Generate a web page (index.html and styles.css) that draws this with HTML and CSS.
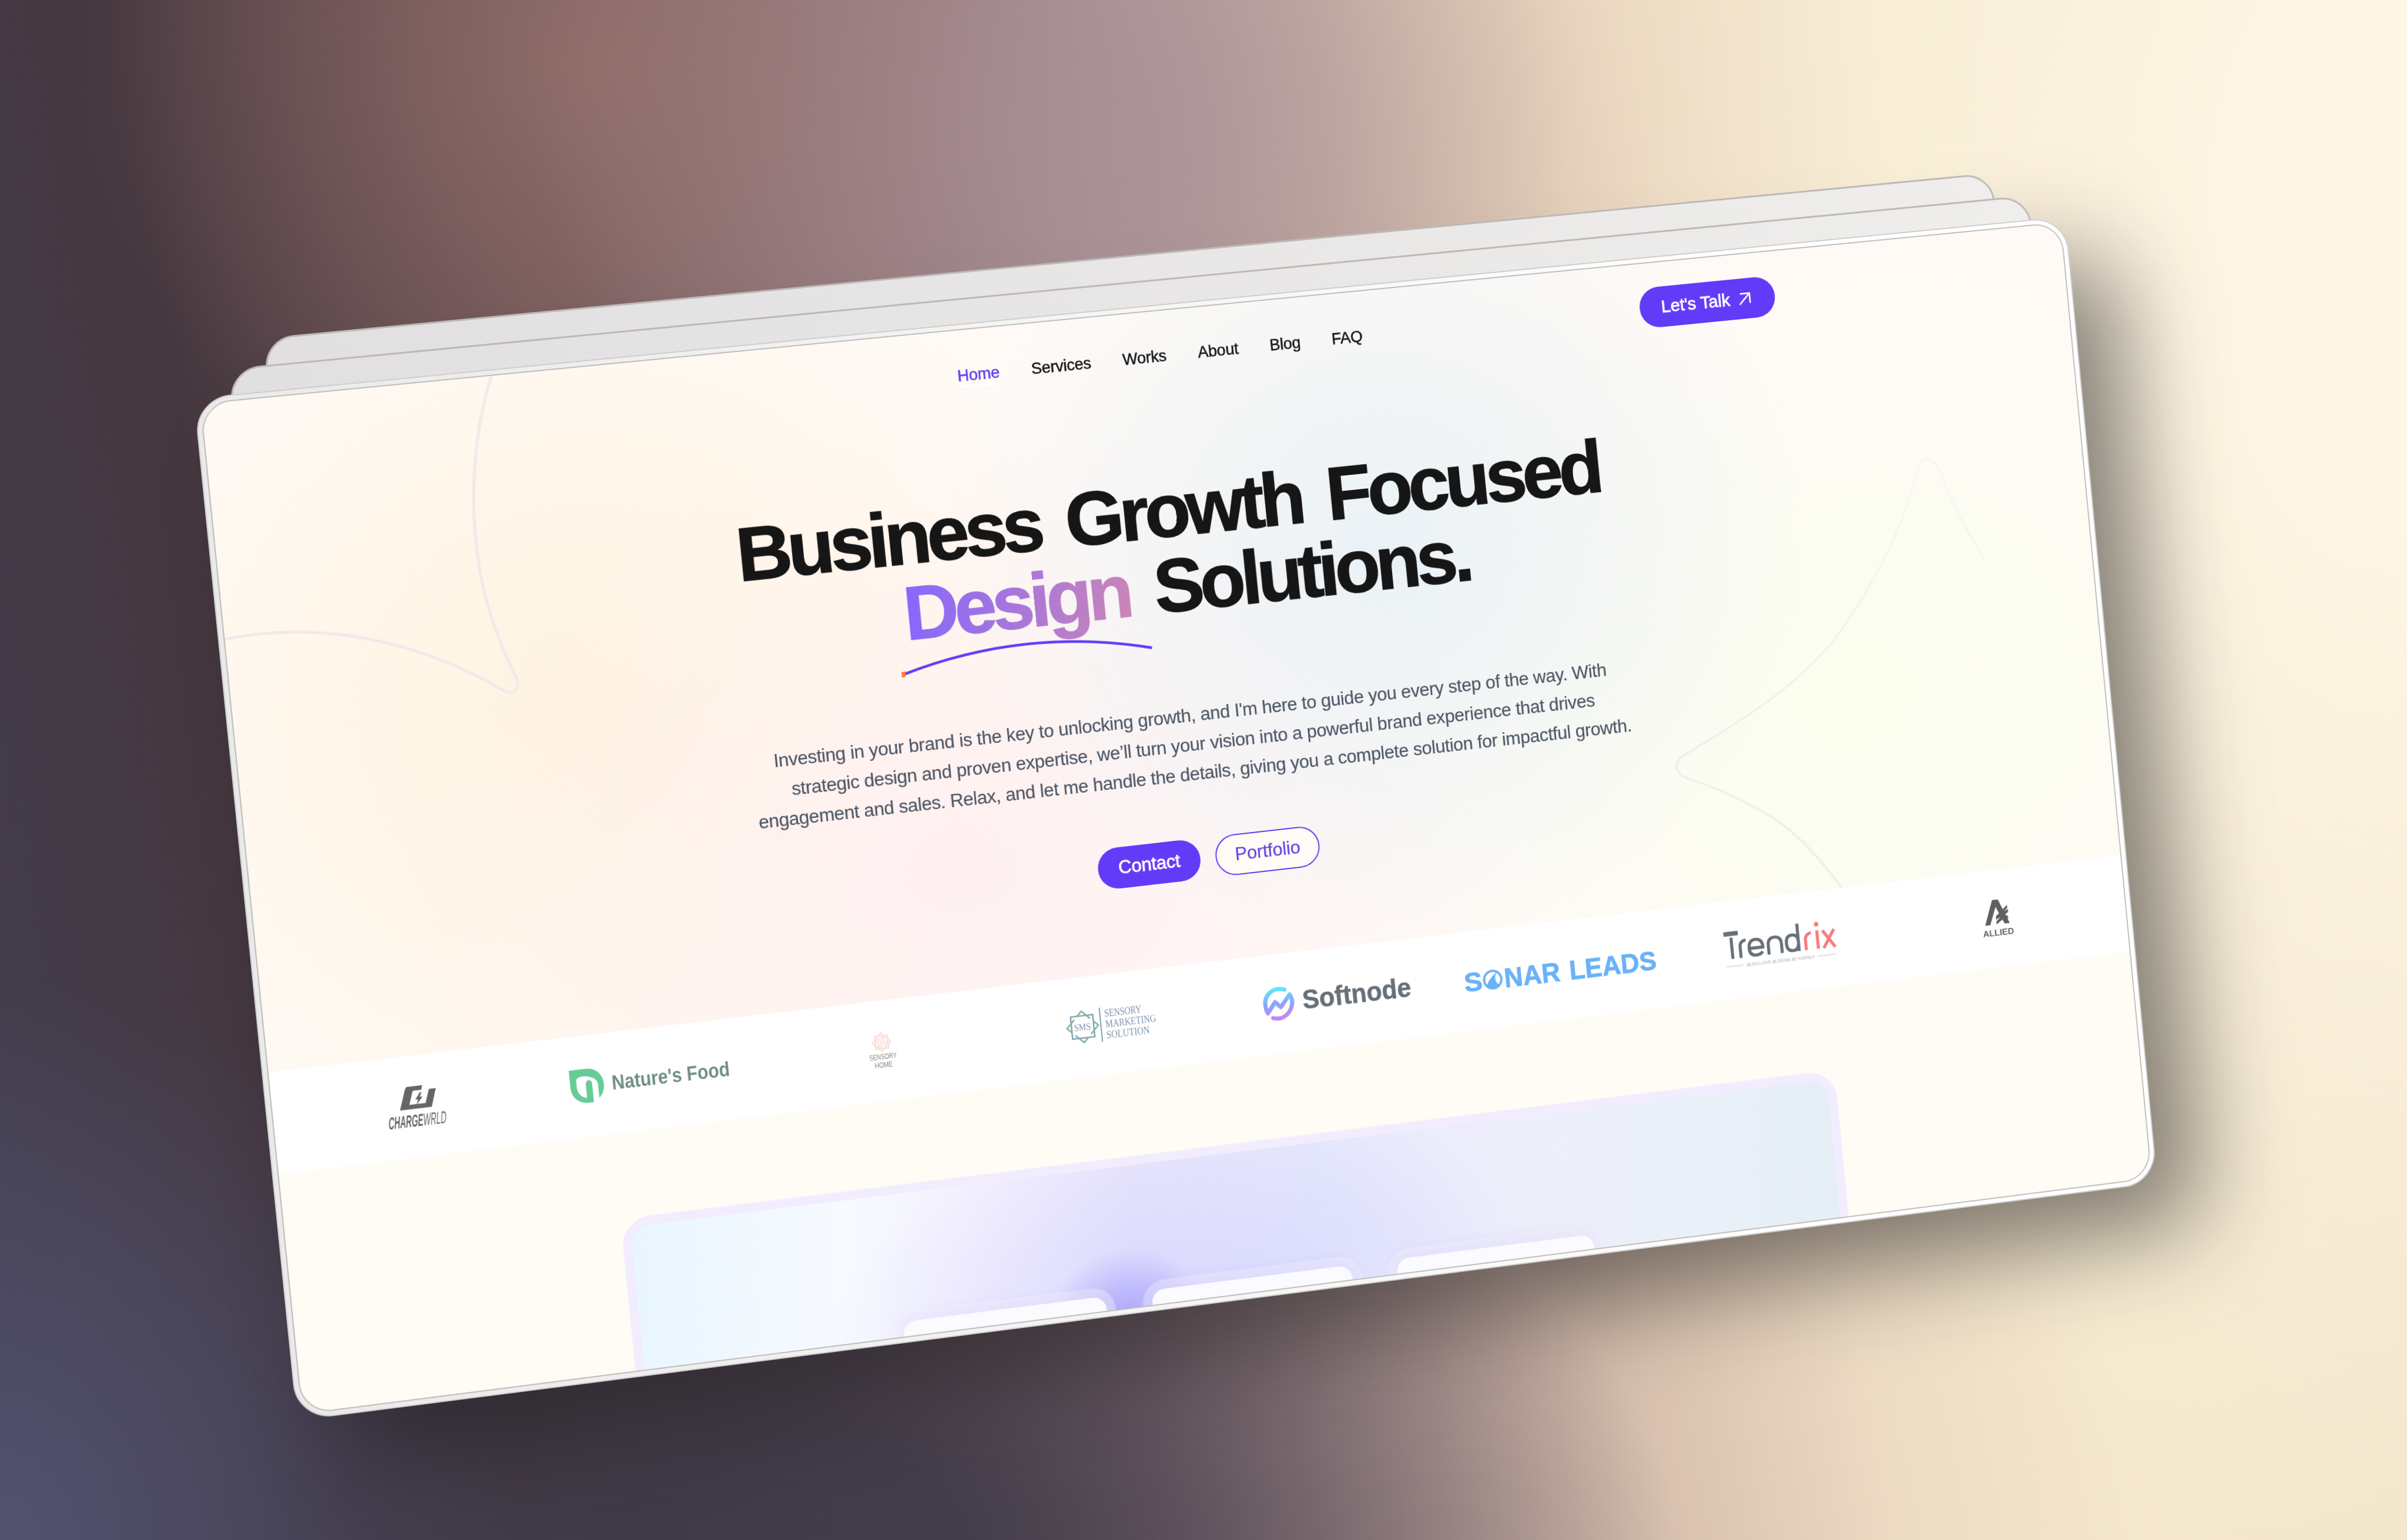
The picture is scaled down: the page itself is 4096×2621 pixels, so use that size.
FILE: index.html
```html
<!DOCTYPE html>
<html lang="en">
<head>
<meta charset="utf-8">
<title>Business Growth Focused Design Solutions</title>
<link rel="stylesheet" href="styles.css">
</head>
<body>
<main class="scene">
  <div class="shade"></div>
  <div class="sheet sheet-back"></div>
  <div class="sheet sheet-mid"></div>
  <div class="window">
    <div class="page">
      <section class="hero">
        <svg class="hero-lines" viewBox="0 0 3178 1112" fill="none" stroke-width="5" stroke-linecap="round">
          <defs><linearGradient id="fade" gradientUnits="userSpaceOnUse" x1="0" y1="380" x2="0" y2="900"><stop offset="0" stop-color="#eef0ee" stop-opacity=".3"/><stop offset="1" stop-color="#eff0ec"/></linearGradient></defs>
          <path stroke="#f3e8ea" d="M474 -2C427 110 413 240 425 345C432 410 449 463 464 503C473 525 456 535 440 523C355 458 240 404 114 391C75 387 35 387 -2 391"/>
          <path stroke="url(#fade)" stroke-width="4" d="M2676 1112C2640 1050 2600 1000 2555 968C2515 940 2470 912 2425 893C2402 882 2402 862 2422 852C2540 800 2650 745 2721 665C2800 575 2850 490 2880 408C2888 380 2910 380 2920 408C2940 480 2960 520 2985 570"/>
        </svg>
        <header class="topbar">
          <nav class="nav">
            <a class="active">Home</a><a>Services</a><a>Works</a><a>About</a><a>Blog</a><a>FAQ</a>
          </nav>
          <a class="btn talk">Let's Talk
            <svg class="arrow" viewBox="0 0 24 24" fill="none" stroke="#fff" stroke-width="2.8"><path d="M2 22L22 2M4 2.500H21.500V20"/></svg>
          </a>
        </header>
        <h1 class="title">
          <span class="line">Business Growth Focused</span>
          <span class="line second"><span class="accent">Design</span> Solutions.</span>
          <svg class="swoosh" viewBox="0 0 430 44" fill="none"><path d="M4 38Q215 -20 426 38" stroke="#613bf8" stroke-width="4.5"/><path d="M1 34L8 33L7 42L1 43Z" fill="#ff7a3c"/></svg>
        </h1>
        <p class="lead">
          <span>Investing in your brand is the key to unlocking growth, and I'm here to guide you every step of the way. With</span>
          <span>strategic design and proven expertise, we’ll turn your vision into a powerful brand experience that drives</span>
          <span>engagement and sales. Relax, and let me handle the details, giving you a complete solution for impactful growth.</span>
        </p>
        <div class="actions">
          <a class="btn contact">Contact</a>
          <a class="btn outline">Portfolio</a>
        </div>
      </section>

      <section class="brands">
        <div class="brand">
          <svg width="102" height="70" viewBox="0 0 106 74">
            <g fill="#666">
              <path d="M41 1H68L66 9H51L43 33H62L59 41H26L38 5ZM79 9H91L81 41H56L59 33H71Z"/>
              <path d="M63 13L54 25H59L55 35L67 21H62L66 13Z"/>
              <text transform="translate(3 72) skewX(-8)" font-size="30" font-weight="700" textLength="60" lengthAdjust="spacingAndGlyphs">CHARGE</text>
              <text transform="translate(63 72) skewX(-8)" font-size="30" textLength="40" lengthAdjust="spacingAndGlyphs">WRLD</text>
            </g>
          </svg>
        </div>
        <div class="brand">
          <svg width="268" height="61" viewBox="0 0 282 64">
            <path fill="#66cc98" d="M1 1H30C48 1 59 14 59 31C59 42 55 49 49 55V30C49 14 13 8 12 20V33C13 45 21 51 28 52V29C28 19 39 19 39 29V61H31C13 61 1 49 1 31Z"/>
            <text x="73" y="43" font-size="36" font-weight="700" fill="#6f8f80" textLength="206" lengthAdjust="spacingAndGlyphs">Nature's Food</text>
          </svg>
        </div>
        <div class="brand">
          <svg width="52" height="62" viewBox="0 0 52 62">
            <g fill="none" stroke="#fadfdb" stroke-width="2">
              <rect x="14" y="5" width="22" height="22"/><rect x="14" y="5" width="22" height="22" transform="rotate(45 25 16)"/>
              <rect x="16" y="7" width="18" height="18" transform="rotate(22.5 25 16)"/><circle cx="25" cy="16" r="6"/><circle cx="25" cy="16" r="2"/>
            </g>
            <g font-size="12" fill="#8c8484">
              <text x="2" y="45" textLength="46" lengthAdjust="spacingAndGlyphs">SENSORY</text>
              <text x="10" y="59" textLength="30" lengthAdjust="spacingAndGlyphs">HOME</text>
            </g>
          </svg>
        </div>
        <div class="brand">
          <svg width="157" height="63" viewBox="0 0 162 64">
            <rect x="9.500" y="11.500" width="39" height="39" fill="none" stroke="#7d9bb8" stroke-width="2.4"/>
            <rect x="9.500" y="11.500" width="39" height="39" fill="none" stroke="#7fb391" stroke-width="2.6" stroke-dasharray="32 7" stroke-dashoffset="12" transform="rotate(45 29 31)"/>
            <path d="M61 1V61" stroke="#7d9bb8" stroke-width="2"/>
            <g class="serif" fill="#7990a8">
              <text x="14" y="37" font-size="17" textLength="29" lengthAdjust="spacingAndGlyphs">SMS</text>
              <text x="69" y="18" font-size="19" textLength="65" lengthAdjust="spacingAndGlyphs">SENSORY</text>
              <text x="69" y="37" font-size="19" textLength="89" lengthAdjust="spacingAndGlyphs">MARKETING</text>
              <text x="69" y="56" font-size="19" textLength="76" lengthAdjust="spacingAndGlyphs">SOLUTION</text>
            </g>
          </svg>
        </div>
        <div class="brand">
          <svg width="260" height="64" viewBox="0 0 260 64">
            <defs><linearGradient id="ring" x1="0" y1="0" x2="0" y2="1"><stop offset="0" stop-color="#5ee6f8"/><stop offset=".5" stop-color="#8aa4ff"/><stop offset="1" stop-color="#c585ee"/></linearGradient></defs>
            <g fill="none" stroke="url(#ring)" stroke-width="7" stroke-linejoin="round">
              <path stroke-linecap="round" d="M40 9C22 1 4 14 5 32C5 38 6 42 8 46L22 28L31 38L48 18C55 30 50 44 40 52C33 57 24 58 16 55"/>
            </g>
            <text x="69" y="46" font-size="46" font-weight="700" fill="#687078" stroke="#687078" stroke-width=".6" textLength="188" lengthAdjust="spacingAndGlyphs">Softnode</text>
          </svg>
        </div>
        <div class="brand">
          <svg width="340" height="50" viewBox="0 0 340 50">
            <g fill="#68b2f8" stroke="#68b2f8" font-size="47" font-weight="700">
              <text x="1" y="43" stroke-width=".8" textLength="32" lengthAdjust="spacingAndGlyphs">S</text>
              <text x="71" y="43" stroke-width=".8" textLength="98" lengthAdjust="spacingAndGlyphs">NAR</text>
              <text x="185" y="43" stroke-width=".8" textLength="153" lengthAdjust="spacingAndGlyphs">LEADS</text>
              <circle cx="51" cy="27" r="15" fill="none" stroke-width="4"/>
              <path stroke="none" d="M40 37C43 28 50 21 59 15C54 23 54 30 61 37C56 44 45 44 40 37Z"/>
            </g>
          </svg>
        </div>
        <div class="brand">
          <svg width="200" height="74" viewBox="0 0 204 76">
            <g fill="none" stroke="#687078" stroke-width="5.500">
              <path stroke-width="8" d="M1 9H27"/><path d="M14 16V54M29 54V34Q29 24 40 23M45 39H70Q70 24 57 24Q45 24 45 39Q45 52 57 52Q65 52 69 47M80 54V37Q80 24 92 24Q104 24 104 37V54M135 5V39Q135 52 124 52Q113 52 113 38Q113 24 124 24Q135 24 135 37V54"/>
              <path stroke="#f77b80" d="M148 54V36Q148 25 159 24M170 21V54M180 22L201 54M201 22L180 54"/>
            </g>
            <circle cx="170" cy="10" r="4" fill="#f77b80"/>
            <text x="38" y="70" font-size="8" fill="#aaa" textLength="124" lengthAdjust="spacingAndGlyphs">BE EXCLUSIVE, BE DEVINE, BE YOURSELF</text>
            <path d="M2 67H32M168 67H200" stroke="#ccc" stroke-width="2" stroke-dasharray="2 1"/>
          </svg>
        </div>
        <div class="brand">
          <svg width="58" height="68" viewBox="0 0 56 66">
            <path fill="#606060" d="M22 1H32L49 43H40L27 13L15 43H6ZM26 29L47 12V17L41 22L48 19V24L42 28L47 31V35L41 33L26 43V38L34 31L26 35Z"/>
            <text x="1" y="62" font-size="15" font-weight="700" fill="#606060" textLength="54">ALLIED</text>
          </svg>
        </div>
      </section>

      <section class="showcase">
        <div class="panel">
          <div class="card"></div><div class="card"></div><div class="card"></div>
        </div>
      </section>
    </div>
  </div>
</main>
</body>
</html>
```
FILE: styles.css
```css
* { box-sizing: border-box; }

body {
  margin: 0;
  width: 4096px;
  height: 2621px;
  overflow: hidden;
  position: relative;
  font-family: "Liberation Sans", sans-serif;
  background:
    radial-gradient(ellipse 900px 950px at 0% 100%, rgba(84, 85, 116, .9), rgba(84, 85, 116, 0) 100%),
    radial-gradient(ellipse 1500px 800px at 33% 100%, rgba(58, 54, 70, .85) 20%, rgba(58, 54, 70, 0) 100%),
    radial-gradient(ellipse 900px 800px at 25% 4%, rgba(158, 118, 112, .65), rgba(158, 118, 112, 0) 100%),
    radial-gradient(ellipse 900px 800px at 44% 8%, rgba(168, 146, 154, .8) 10%, rgba(168, 146, 154, 0) 100%),
    radial-gradient(ellipse 1300px 2300px at 100% 15%, rgba(255, 247, 230, .95) 20%, rgba(255, 247, 230, 0) 100%),
    linear-gradient(80deg, #433e50 0%, #45373f 14%, #6c5355 28%, #92787c 44%, #b99f98 54%, #dac3b0 63%, #eddbc3 71%, #f5e8cc 80%, #f1e3ca 100%);
}

/* Plane tilted in perspective: everything inside is laid out flat at 3200 x 1703. */
.scene {
  position: absolute;
  left: 0;
  top: 0;
  width: 3200px;
  height: 1703px;
  transform-origin: 0 0;
  transform: matrix3d(1.0595656, -0.0900719, 0, 0.00001823531, 0.103946, 1.026183, 0, 0.00000177087, 0, 0, 1, 0, 329.5, 677.7, 0, 1);
}

.shade {
  position: absolute;
  inset: 0;
  border-radius: 60px;
  box-shadow: 75px 80px 170px rgba(30, 28, 30, .55);
}

.sheet {
  position: absolute;
  height: 400px;
  border: 3px solid #bcb9b7;
  background: linear-gradient(90deg, #e1dfe0, #efeeec);
}
.sheet-mid { left: 60px; right: 62px; top: -43px; border-radius: 52px; }
.sheet-back { left: 121px; right: 124px; top: -88px; border-radius: 50px; }

.window {
  position: relative;
  height: 100%;
  padding: 7px;
  border: 2px solid #cfcecd;
  border-radius: 60px;
  background: linear-gradient(90deg, #eaeaeb, #f6f6f5 50%, #fff 85%);
}

.page {
  height: 100%;
  overflow: hidden;
  border: 2px solid #c0bebb;
  border-radius: 51px;
  background: #fffbf5;
}

.hero {
  position: relative;
  height: 1112px;
  display: flex;
  flex-direction: column;
  align-items: center;
  padding-top: 42px;
  background:
    radial-gradient(ellipse 750px 700px at 61% 40%, rgba(233, 241, 246, .95), rgba(233, 241, 246, 0)),
    radial-gradient(ellipse 900px 720px at 86% 70%, rgba(251, 254, 238, 1), rgba(251, 254, 238, 0)),
    radial-gradient(ellipse 950px 750px at 37% 82%, rgba(255, 240, 241, .95), rgba(255, 240, 241, 0)),
    radial-gradient(ellipse 900px 850px at 18% 52%, rgba(255, 243, 222, .95), rgba(255, 243, 222, 0)),
    #fffaf6;
}
.hero-lines { position: absolute; left: 0; top: 0; width: 3178px; height: 1112px; }

.topbar {
  position: relative;
  width: 2140px;
  height: 70px;
  display: grid;
  grid-template-columns: 1fr auto 1fr;
  align-items: center;
}
.nav {
  grid-column: 2;
  display: flex;
  gap: 54px;
  font-size: 27px;
  letter-spacing: -.25px;
  color: #151515;
  -webkit-text-stroke: .5px currentColor;
}
.nav .active { color: #613bf8; box-shadow: 0 11px 0 -6px #fff; }

.btn {
  display: flex;
  align-items: center;
  justify-content: center;
  height: 70px;
  border-radius: 35px;
  background: #613bf8;
  color: #fff;
  font-size: 31px;
  letter-spacing: -.2px;
  -webkit-text-stroke: .8px currentColor;
}
.talk { justify-self: end; gap: 15px; font-size: 30px; width: 239px; padding-right: 4px; white-space: nowrap; }
.arrow { width: 23px; height: 23px; flex: none; }
.contact { width: 175px; }
.outline {
  width: 179px;
  background: #fffbf6;
  border: 2px solid #613bf8;
  color: #5a43e0;
  -webkit-text-stroke: .2px currentColor;
}

.title {
  position: relative;
  margin: 164px 0 0;
  width: 1600px;
  font-size: 128px;
  line-height: 128px;
  font-weight: 700;
  letter-spacing: -7.5px;
  word-spacing: 15px;
  text-align: center;
  color: #161616;
}
.line { display: block; white-space: nowrap; -webkit-text-stroke: 1.6px currentColor; }
.line:first-child { position: relative; left: -5px; }
.line:first-child { letter-spacing: -7.3px; }
.second { padding-left: 18px; }
.accent {
  color: transparent;
  background: linear-gradient(100deg, #8566ff, #cd87b4);
  -webkit-background-clip: text;
  background-clip: text;
  padding: 0 8px 14px 0;
  margin-right: -8px;
}
.swoosh { position: absolute; left: 310px; top: 255px; width: 430px; height: 44px; }

.lead {
  position: relative;
  left: -2px;
  margin: 134px 0 0;
  font-size: 31px;
  line-height: 50px;
  letter-spacing: -.42px;
  text-align: center;
  color: #4d5766;
}
.lead span { display: block; white-space: nowrap; -webkit-text-stroke: .2px currentColor; }

.actions { display: flex; gap: 26px; margin-top: 84px; position: relative; left: -2px; }

.brands {
  height: 170px;
  padding: 0 37px;
  background: #fff;
  display: grid;
  grid-template-columns: repeat(8, 1fr);
  align-items: center;
  justify-items: center;
}
.brand svg { display: block; overflow: visible; }
.serif { font-family: "Liberation Serif", serif; }

.showcase { display: flex; justify-content: center; padding-top: 143px; }
.panel {
  width: 2087px;
  height: 700px;
  border: 15px solid #f1edff;
  border-radius: 50px;
  padding-top: 216px;
  display: flex;
  justify-content: center;
  gap: 78px;
  background:
    radial-gradient(ellipse 130px 110px at 39.5% 37%, rgba(130, 120, 250, .5), rgba(170, 165, 255, 0)),
    radial-gradient(ellipse 620px 300px at 45% 34%, rgba(205, 205, 255, .55), rgba(205, 205, 255, 0)),
    linear-gradient(95deg, #e9f6ff 0, #f7faff 17%, #f3f0fe 27%, #e8e5fc 40%, #e6e9fd 56%, #eeeefb 70%, #e9f0f7 88%, #e4eef5 100%);
}
.card {
  width: 344px;
  height: 300px;
  border-radius: 22px;
  background: #fafaff;
  box-shadow: 0 0 0 14px rgba(228, 225, 253, .25), 0 0 0 16px rgba(255, 255, 255, .25), 0 -6px 26px rgba(140, 130, 240, .16);
}
```
